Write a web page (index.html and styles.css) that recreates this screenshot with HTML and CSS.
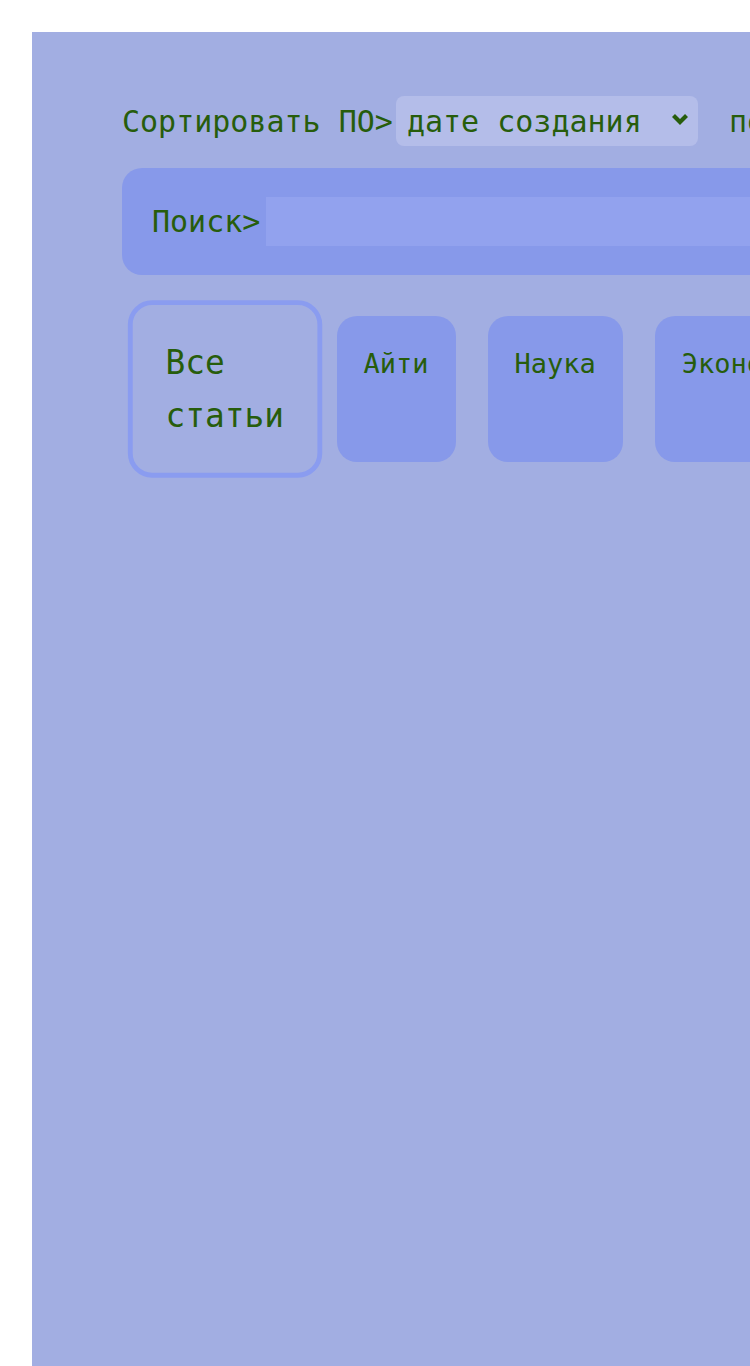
FILE: index.html
```html
<!DOCTYPE html>
<html lang="ru">
<head>
<meta charset="utf-8">
<title>Статьи</title>
<link rel="stylesheet" href="styles.css">
</head>
<body>
<main class="page">
  <div class="sort-row">
    <span class="sort-label">Сортировать ПО&gt;</span>
    <span class="select-wrap">
      <select class="sort-select">
        <option>дате создания</option>
        <option>названию</option>
      </select>
      <svg class="chevron" width="18" height="12" viewBox="0 0 18 12" aria-hidden="true">
        <path d="M2.5 2.5 L9 9 L15.5 2.5" fill="none" stroke="currentColor" stroke-width="4.2"/>
      </svg>
    </span>
    <span class="sort-order">по убыванию</span>
  </div>

  <div class="search-bar">
    <label class="search-label" for="q">Поиск&gt;</label>
    <input class="search-input" id="q" type="text">
  </div>

  <div class="cards">
    <div class="card card-active">Все статьи</div>
    <div class="card">Айти</div>
    <div class="card">Наука</div>
    <div class="card">Экономика</div>
    <div class="card">Политика</div>
  </div>
</main>
</body>
</html>
```
FILE: styles.css
```css
html, body {
  margin: 0;
  padding: 0;
  overflow: hidden;
  background: #ffffff;
}

body {
  font-family: "DejaVu Sans Mono", monospace;
  color: #275d0c;
}

.page {
  box-sizing: border-box;
  margin: 32px 0 0 32px;
  width: 1300px;
  min-height: 1334px;
  padding: 64px 90px;
  background: #a2aee2;
}

.sort-row {
  display: flex;
  align-items: center;
  font-size: 30px;
  white-space: nowrap;
}

.select-wrap {
  position: relative;
  margin-left: 3px;
  display: inline-block;
}

.sort-select {
  appearance: none;
  -webkit-appearance: none;
  box-sizing: border-box;
  width: 302px;
  height: 50px;
  padding: 0 30px 0 11px;
  border: none;
  border-radius: 8px;
  background: #b4bde9;
  color: #275d0c;
  font-family: "DejaVu Sans Mono", monospace;
  font-size: 30px;
  outline: none;
}

.chevron {
  position: absolute;
  right: 9px;
  top: 17px;
  color: #275d0c;
  pointer-events: none;
}

.sort-order {
  margin-left: 31px;
}

.search-bar {
  display: flex;
  align-items: center;
  margin-top: 22px;
  padding: 29px 30px 29px 30px;
  background: #8799ea;
  border-radius: 20px;
  font-size: 30px;
}

.search-label {
  white-space: nowrap;
}

.search-input {
  flex: 1;
  height: 49px;
  margin-left: 6px;
  padding: 0 10px;
  border: none;
  background: #92a2ee;
  font-family: "DejaVu Sans Mono", monospace;
  font-size: 30px;
  color: #275d0c;
  outline: none;
}

.cards {
  display: flex;
  gap: 32px;
  margin-top: 41px;
  padding-left: 23px;
}

.card {
  flex: none;
  width: min-content;
  padding: 26px 27px;
  border-radius: 20px;
  background: #8799ea;
  font-size: 27px;
  line-height: 1.6;
}

.card-active {
  background: transparent;
  border: 4px solid #8a9cf0;
  transform: scale(1.215);
}
```
